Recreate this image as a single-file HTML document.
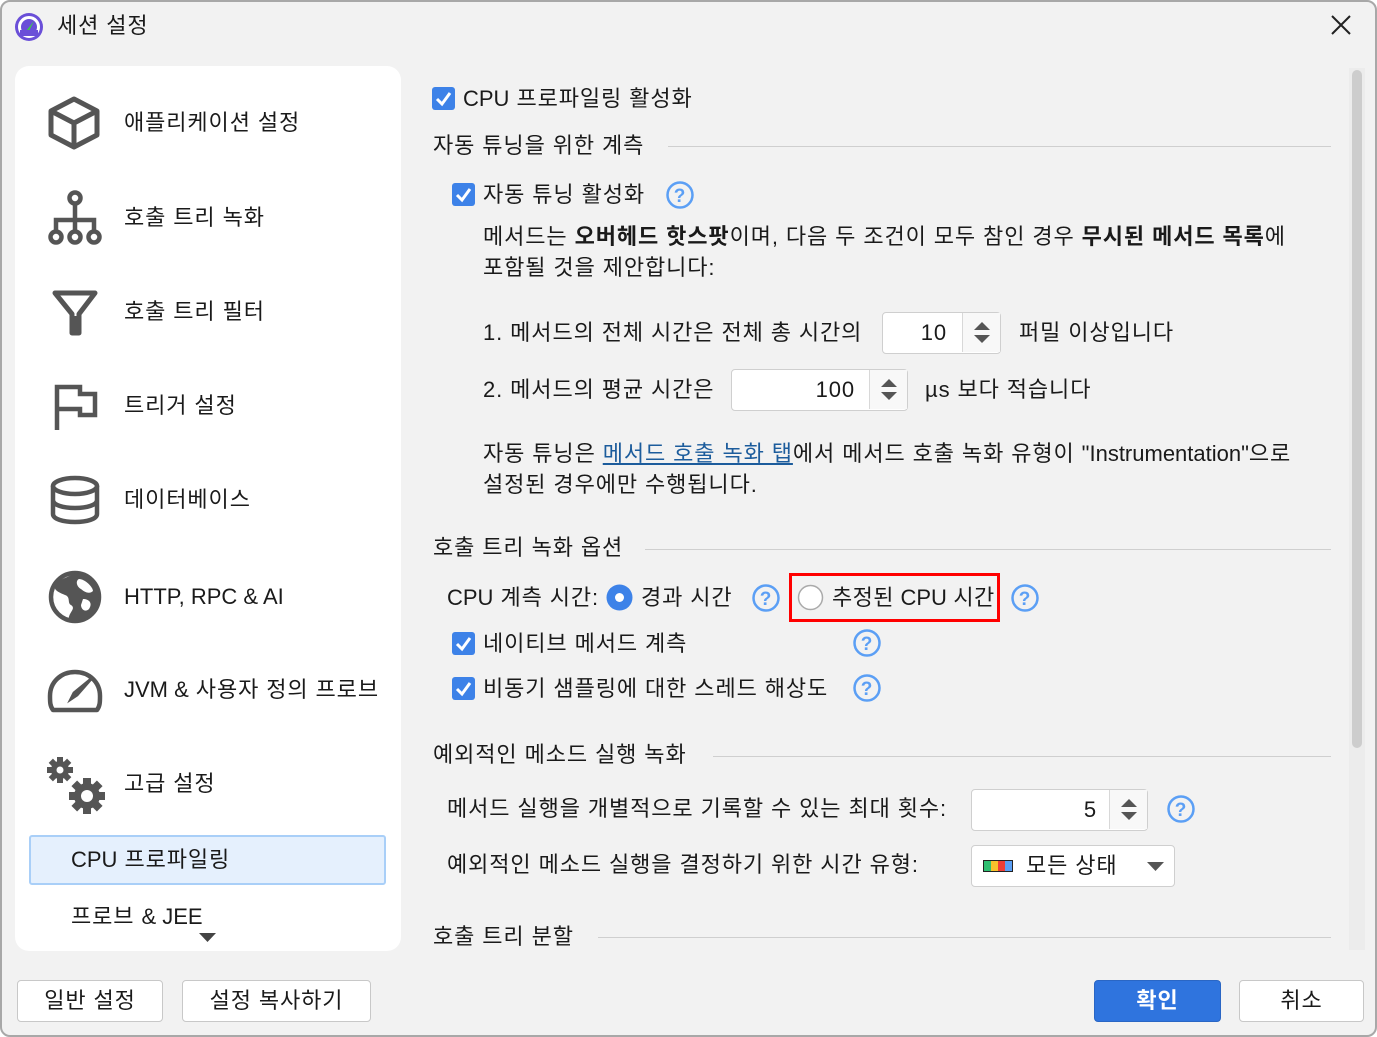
<!DOCTYPE html>
<html><head><meta charset="utf-8">
<style>
*{margin:0;padding:0;box-sizing:border-box}
html,body{width:1377px;height:1037px;overflow:hidden;background:#fff}
body{font-family:"Liberation Sans","Noto Sans CJK KR",sans-serif;font-size:22px;letter-spacing:0.9px;color:#1a1a1a}
#win{position:absolute;left:0;top:0;width:1377px;height:1037px;background:#f2f2f2;border-radius:10px;overflow:hidden}
#bord{position:absolute;left:0;top:0;width:1377px;height:1037px;border:2px solid #a8a8a8;border-radius:10px;pointer-events:none}
.t{position:absolute;height:30px;line-height:30px;white-space:nowrap;margin-top:1px}
.l{letter-spacing:0}
.side{position:absolute;left:15px;top:66px;width:386px;height:885px;background:#fff;border-radius:14px}
.cb{position:absolute;width:23px;height:23px;background:#3d82e8;border-radius:3px}
.cb svg{position:absolute;left:0;top:0}
.hl{position:absolute;height:1px;background:#cfcfcf}
.help{position:absolute;width:28px;height:28px}
.spin{position:absolute;height:42px;background:#fff;border:1.5px solid #cfcfcf;border-radius:4px}
.spin .v{position:absolute;top:0;height:39px;line-height:39px;text-align:right}
.spin .b{position:absolute;right:0;top:0;width:38px;height:39px;border-left:1.5px solid #d8d8d8;background:#f8f8f8}
.btn{position:absolute;height:42px;background:#fff;border:1.5px solid #c8c8c8;border-radius:4px;text-align:center;line-height:40px}
.ic{position:absolute}
</style></head><body>
<div id="win">
<svg class="ic" style="left:14px;top:12px" width="30" height="30" viewBox="0 0 30 30"><circle cx="15" cy="15" r="14" fill="#6a4fd8"/><circle cx="15" cy="15" r="9.5" fill="none" stroke="#fff" stroke-width="3"/><path d="M12 19 L20 9 L15 19Z" fill="#3ecb4a"/><rect x="6" y="18" width="18" height="6" fill="#6a4fd8"/></svg>
<div class="t" style="left:57px;top:10px;font-size:22px">세션 설정</div>
<svg class="ic" style="left:1330px;top:14px" width="22" height="22" viewBox="0 0 22 22"><path d="M2 2L20 20M20 2L2 20" stroke="#222" stroke-width="2"/></svg>

<div class="side"></div>
<svg class="ic" style="left:48px;top:96px" width="52" height="54" viewBox="0 0 52 54" fill="none" stroke="#555" stroke-width="5" stroke-linejoin="round"><path d="M26 3L49 15V39L26 51L3 39V15Z"/><path d="M3 15L26 27L49 15M26 27V51"/></svg>
<svg class="ic" style="left:47px;top:190px" width="56" height="56" viewBox="0 0 56 56" fill="none" stroke="#555" stroke-width="4.5"><circle cx="28" cy="8" r="5.5"/><path d="M28 14V30M9 43V30H47V43M28 30V43"/><circle cx="9" cy="47" r="5.5"/><circle cx="28" cy="47" r="5.5"/><circle cx="47" cy="47" r="5.5"/></svg>
<svg class="ic" style="left:52px;top:290px" width="46" height="46" viewBox="0 0 46 46"><path d="M3 3H43L27 24V43H20V24Z" fill="none" stroke="#555" stroke-width="5" stroke-linejoin="round"/><rect x="20" y="26" width="7" height="17" fill="#555"/></svg>
<svg class="ic" style="left:54px;top:384px" width="44" height="48" viewBox="0 0 44 48" fill="none" stroke="#555" stroke-width="4.5"><path d="M3 46V3H26V10H41V31H26V25H3"/></svg>
<svg class="ic" style="left:47px;top:474px" width="56" height="52" viewBox="0 0 56 52" fill="none" stroke="#555" stroke-width="4.5"><ellipse cx="28" cy="12" rx="22" ry="8"/><path d="M6 12V40C6 45 16 48 28 48S50 45 50 40V12M6 26C6 31 16 34 28 34S50 31 50 26"/></svg>
<svg class="ic" style="left:47px;top:569px" width="56" height="56" viewBox="0 0 56 56"><circle cx="28" cy="28" r="24" fill="none" stroke="#555" stroke-width="4.5"/><path d="M28 4C22 8 12 10 8 16C6 22 14 24 18 26C24 28 20 34 24 36C30 40 20 44 22 52L28 52C40 52 52 40 52 28C52 16 40 4 28 4ZM32 10C38 10 46 18 46 22C42 26 36 22 34 20C30 18 28 12 32 10ZM36 30C42 30 46 34 42 40C38 44 34 40 34 36Z" fill="#555"/></svg>
<svg class="ic" style="left:47px;top:668px" width="56" height="46" viewBox="0 0 56 46" fill="none" stroke="#555" stroke-width="4.5"><path d="M6 42C3 38 3 34 3 28C3 14 14 4 28 4S53 14 53 28C53 34 53 38 50 42Z" stroke-linejoin="round"/><path d="M44 11L30 27L24 31L27 25Z" fill="#555" stroke-width="3"/></svg>
<svg class="ic" style="left:46px;top:756px" width="60" height="60" viewBox="0 0 60 60"><g fill="#555"><circle cx="14" cy="14" r="9"/><rect x="11" y="1" width="6" height="26"/><rect x="1" y="11" width="26" height="6"/><rect x="11" y="1" width="6" height="26" transform="rotate(45 14 14)"/><rect x="11" y="1" width="6" height="26" transform="rotate(-45 14 14)"/><circle cx="41" cy="40" r="13"/><rect x="37" y="22" width="8" height="36"/><rect x="23" y="36" width="36" height="8"/><rect x="37" y="22" width="8" height="36" transform="rotate(45 41 40)"/><rect x="37" y="22" width="8" height="36" transform="rotate(-45 41 40)"/></g><circle cx="14" cy="14" r="3.5" fill="#fff"/><circle cx="41" cy="40" r="6" fill="#fff"/></svg>

<div class="t" style="left:124px;top:107px">애플리케이션 설정</div>
<div class="t" style="left:124px;top:202px">호출 트리 녹화</div>
<div class="t" style="left:124px;top:296px">호출 트리 필터</div>
<div class="t" style="left:124px;top:390px">트리거 설정</div>
<div class="t" style="left:124px;top:484px">데이터베이스</div>
<div class="t l" style="left:124px;top:581px">HTTP, RPC &amp; AI</div>
<div class="t" style="left:124px;top:674px"><span class="l">JVM &amp;</span> 사용자 정의 프로브</div>
<div class="t" style="left:124px;top:768px">고급 설정</div>
<div style="position:absolute;left:29px;top:835px;width:357px;height:50px;background:#e5f0fd;border:2px solid #a9cff8;border-radius:3px"></div>
<div class="t" style="left:71px;top:844px"><span class="l">CPU</span> 프로파일링</div>
<div class="t" style="left:71px;top:901px">프로브 <span class="l">&amp; JEE</span></div>
<svg class="ic" style="left:199px;top:933px" width="17" height="10"><path d="M0 0H17L8.5 9Z" fill="#444"/></svg>

<div style="position:absolute;left:1349px;top:68px;width:16px;height:882px;background:#ececec"></div>
<div style="position:absolute;left:1352px;top:70px;width:10px;height:678px;background:#cdcdcd;border-radius:5px"></div>

<div class="cb" style="left:432px;top:87px"><svg width="23" height="23"><path d="M5 12L10 17L18 6" fill="none" stroke="#fff" stroke-width="3"/></svg></div>
<div class="t" style="left:463px;top:83px"><span class="l">CPU</span> 프로파일링 활성화</div>
<div class="t" style="left:433px;top:130px">자동 튜닝을 위한 계측</div>
<div class="hl" style="left:668px;top:146px;width:663px"></div>
<div class="cb" style="left:452px;top:183px"><svg width="23" height="23"><path d="M5 12L10 17L18 6" fill="none" stroke="#fff" stroke-width="3"/></svg></div>
<div class="t" style="left:483px;top:179px">자동 튜닝 활성화</div>
<svg class="help" style="left:666px;top:181px" viewBox="0 0 28 28"><circle cx="14" cy="14" r="12.5" fill="none" stroke="#5b9ff5" stroke-width="2.5"/><text x="14" y="21" text-anchor="middle" font-size="19" font-weight="bold" fill="#5b9ff5" font-family="Liberation Sans">?</text></svg>
<div class="t" style="left:483px;top:221px">메서드는 <b>오버헤드 핫스팟</b>이며, 다음 두 조건이 모두 참인 경우 <b>무시된 메서드 목록</b>에</div>
<div class="t" style="left:483px;top:252px">포함될 것을 제안합니다:</div>
<div class="t" style="left:483px;top:317px">1. 메서드의 전체 시간은 전체 총 시간의</div>
<div class="spin" style="left:882px;top:312px;width:119px"><div class="v" style="left:0;width:64px">10</div><div class="b"><svg width="38" height="39"><path d="M11 17L19 9L27 17Z M11 22L19 30L27 22Z" fill="#555"/></svg></div></div>
<div class="t" style="left:1019px;top:317px">퍼밀 이상입니다</div>
<div class="t" style="left:483px;top:374px">2. 메서드의 평균 시간은</div>
<div class="spin" style="left:731px;top:369px;width:177px"><div class="v" style="left:0;width:123px">100</div><div class="b"><svg width="38" height="39"><path d="M11 17L19 9L27 17Z M11 22L19 30L27 22Z" fill="#555"/></svg></div></div>
<div class="t" style="left:925px;top:374px">µs 보다 적습니다</div>
<div class="t" style="left:483px;top:438px">자동 튜닝은 <span style="color:#1c5c9c;text-decoration:underline">메서드 호출 녹화 탭</span>에서 메서드 호출 녹화 유형이 <span class="l">"Instrumentation"</span>으로</div>
<div class="t" style="left:483px;top:469px">설정된 경우에만 수행됩니다.</div>

<div class="t" style="left:433px;top:532px">호출 트리 녹화 옵션</div>
<div class="hl" style="left:645px;top:549px;width:686px"></div>
<div class="t" style="left:447px;top:582px"><span class="l">CPU</span> 계측 시간:</div>
<svg class="ic" style="left:606px;top:584px" width="27" height="27"><circle cx="13.5" cy="13.5" r="13" fill="#3d82e8"/><circle cx="13.5" cy="13.5" r="4.5" fill="#fff"/></svg>
<div class="t" style="left:641px;top:582px">경과 시간</div>
<svg class="help" style="left:752px;top:584px" viewBox="0 0 28 28"><circle cx="14" cy="14" r="12.5" fill="none" stroke="#5b9ff5" stroke-width="2.5"/><text x="14" y="21" text-anchor="middle" font-size="19" font-weight="bold" fill="#5b9ff5" font-family="Liberation Sans">?</text></svg>
<div style="position:absolute;left:789px;top:573px;width:211px;height:49px;border:3px solid #f00"></div>
<svg class="ic" style="left:797px;top:584px" width="27" height="27"><circle cx="13.5" cy="13.5" r="12" fill="#fff" stroke="#aaa" stroke-width="1.5"/></svg>
<div class="t" style="left:832px;top:582px;letter-spacing:0.4px">추정된 <span class="l">CPU</span> 시간</div>
<svg class="help" style="left:1011px;top:584px" viewBox="0 0 28 28"><circle cx="14" cy="14" r="12.5" fill="none" stroke="#5b9ff5" stroke-width="2.5"/><text x="14" y="21" text-anchor="middle" font-size="19" font-weight="bold" fill="#5b9ff5" font-family="Liberation Sans">?</text></svg>
<div class="cb" style="left:452px;top:632px"><svg width="23" height="23"><path d="M5 12L10 17L18 6" fill="none" stroke="#fff" stroke-width="3"/></svg></div>
<div class="t" style="left:483px;top:628px">네이티브 메서드 계측</div>
<svg class="help" style="left:853px;top:629px" viewBox="0 0 28 28"><circle cx="14" cy="14" r="12.5" fill="none" stroke="#5b9ff5" stroke-width="2.5"/><text x="14" y="21" text-anchor="middle" font-size="19" font-weight="bold" fill="#5b9ff5" font-family="Liberation Sans">?</text></svg>
<div class="cb" style="left:452px;top:677px"><svg width="23" height="23"><path d="M5 12L10 17L18 6" fill="none" stroke="#fff" stroke-width="3"/></svg></div>
<div class="t" style="left:483px;top:673px">비동기 샘플링에 대한 스레드 해상도</div>
<svg class="help" style="left:853px;top:674px" viewBox="0 0 28 28"><circle cx="14" cy="14" r="12.5" fill="none" stroke="#5b9ff5" stroke-width="2.5"/><text x="14" y="21" text-anchor="middle" font-size="19" font-weight="bold" fill="#5b9ff5" font-family="Liberation Sans">?</text></svg>

<div class="t" style="left:433px;top:739px">예외적인 메소드 실행 녹화</div>
<div class="hl" style="left:713px;top:756px;width:618px"></div>
<div class="t" style="left:447px;top:793px">메서드 실행을 개별적으로 기록할 수 있는 최대 횟수:</div>
<div class="spin" style="left:971px;top:789px;width:177px"><div class="v" style="left:0;width:125px">5</div><div class="b"><svg width="38" height="39"><path d="M11 17L19 9L27 17Z M11 22L19 30L27 22Z" fill="#555"/></svg></div></div>
<svg class="help" style="left:1167px;top:795px" viewBox="0 0 28 28"><circle cx="14" cy="14" r="12.5" fill="none" stroke="#5b9ff5" stroke-width="2.5"/><text x="14" y="21" text-anchor="middle" font-size="19" font-weight="bold" fill="#5b9ff5" font-family="Liberation Sans">?</text></svg>
<div class="t" style="left:447px;top:849px">예외적인 메소드 실행을 결정하기 위한 시간 유형:</div>
<div class="spin" style="left:971px;top:845px;width:204px">
<svg style="position:absolute;left:11px;top:14px" width="30" height="12"><rect x="0" y="0" width="30" height="12" fill="#222"/><rect x="1" y="1" width="7" height="10" fill="#2fbf71"/><rect x="8" y="1" width="7" height="10" fill="#f8c22c"/><rect x="15" y="1" width="7" height="10" fill="#ef3e36"/><rect x="22" y="1" width="7" height="10" fill="#5b9ff5"/></svg>
<div class="t" style="left:54px;top:4px">모든 상태</div>
<svg style="position:absolute;left:175px;top:16px" width="17" height="10"><path d="M0 0H17L8.5 9Z" fill="#555"/></svg></div>

<div class="t" style="left:433px;top:921px">호출 트리 분할</div>
<div class="hl" style="left:598px;top:937px;width:733px"></div>

<div class="btn" style="left:17px;top:980px;width:146px">일반 설정</div>
<div class="btn" style="left:182px;top:980px;width:189px">설정 복사하기</div>
<div class="btn" style="left:1094px;top:980px;width:127px;background:#2f74de;border-color:#2a66c4;color:#fff;font-weight:bold">확인</div>
<div class="btn" style="left:1239px;top:980px;width:125px">취소</div>
</div>
<div id="bord"></div>
</body></html>
